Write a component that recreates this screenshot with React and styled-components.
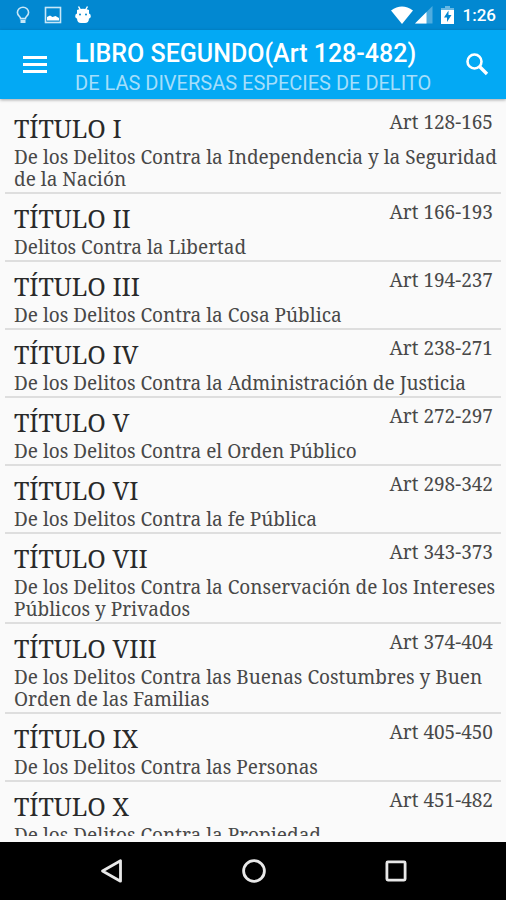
import React, { Component } from 'react';
import styled, { createGlobalStyle } from 'styled-components';

const GlobalStyle = createGlobalStyle`
  * {
    box-sizing: border-box;
  }

  body {
    margin: 0;
    background-color: #fafafa;
    font-family: Roboto, 'Liberation Sans', sans-serif;
  }
`;

const Screen = styled.div`
  display: flex;
  flex-direction: column;
  height: 100vh;
`;

const StatusBar = styled.div`
  display: flex;
  align-items: center;
  justify-content: space-between;
  flex-shrink: 0;
  height: 30px;
  padding: 0 10px 0 14px;
  background-color: #0288d1;
  color: white;
`;

const StatusGroup = styled.div`
  display: flex;
  align-items: center;
  gap: ${props => props.$gap}px;
`;

const Clock = styled.span`
  margin-left: 1px;
  font-size: 17px;
  font-weight: 500;
  line-height: 32px;
`;

const AppBar = styled.header`
  display: flex;
  align-items: center;
  flex-shrink: 0;
  height: 69px;
  padding: 0 13px 0 18px;
  background-color: #03a9f4;
  box-shadow: 0 1px 3px rgba(0, 0, 0, 0.35);
  color: white;
  z-index: 1;
`;

const BarButton = styled.button`
  display: flex;
  padding: 0;
  border: none;
  background: none;
  color: inherit;
  cursor: pointer;
`;

const Titles = styled.div`
  flex-grow: 1;
  padding-top: 6px;
  margin-left: 23px;
  white-space: nowrap;
`;

const BarTitle = styled.h1`
  margin: 0;
  font-size: 25px;
  font-weight: 500;
  line-height: 30px;
`;

const BarSubtitle = styled.p`
  margin: 0;
  color: #a4defb;
  font-size: 20px;
  line-height: 28px;
`;

const ListArea = styled.main`
  flex: 1;
  min-height: 0;
  padding: 5px 5px 6px;
`;

const List = styled.ul`
  height: 100%;
  margin: 0;
  padding: 0;
  overflow: hidden;
  list-style: none;
`;

const Item = styled.li`
  border-bottom: 2px solid #dedede;
`;

const ItemLink = styled.a`
  display: block;
  padding: 7px 0 2px 9px;
  color: #484848;
  font-family: 'Noto Serif', 'DejaVu Serif', serif;
  text-decoration: none;
`;

const ItemHead = styled.div`
  display: flex;
  align-items: flex-start;
  justify-content: space-between;
  padding: 0 8px 1px 0;
`;

const ItemTitle = styled.h2`
  margin: 0;
  color: #2a2a2a;
  font-size: 25px;
  font-weight: 400;
  line-height: 34px;
`;

const Articles = styled.span`
  font-size: 19px;
  line-height: 22px;
`;

const Summary = styled.p`
  margin: 0;
  font-size: 19px;
  line-height: 22px;
`;

const NavBar = styled.nav`
  display: flex;
  align-items: center;
  justify-content: center;
  gap: 114px;
  flex-shrink: 0;
  height: 58px;
  padding-left: 2px;
  background-color: black;
  color: #e8e8e8;
`;

const titles = [
  { id: 'I', articles: '128-165', text: 'De los Delitos Contra la Independencia y la Seguridad de la Nación' },
  { id: 'II', articles: '166-193', text: 'Delitos Contra la Libertad' },
  { id: 'III', articles: '194-237', text: 'De los Delitos Contra la Cosa Pública' },
  { id: 'IV', articles: '238-271', text: 'De los Delitos Contra la Administración de Justicia' },
  { id: 'V', articles: '272-297', text: 'De los Delitos Contra el Orden Público' },
  { id: 'VI', articles: '298-342', text: 'De los Delitos Contra la fe Pública' },
  { id: 'VII', articles: '343-373', text: 'De los Delitos Contra la Conservación de los Intereses Públicos y Privados' },
  { id: 'VIII', articles: '374-404', text: 'De los Delitos Contra las Buenas Costumbres y Buen Orden de las Familias' },
  { id: 'IX', articles: '405-450', text: 'De los Delitos Contra las Personas' },
  { id: 'X', articles: '451-482', text: 'De los Delitos Contra la Propiedad' }
];

const BulbIcon = () => (
  <svg width="18" height="18" viewBox="0 0 18 18" fill="none" stroke="#c8e7f8" strokeWidth="1.6">
    <path d="M6.6 12.6c0-2-3.200-3-3.200-6.200a5.600 5.200 0 0 1 11.200 0c0 3.200-3.200 4.200-3.200 6.200z" />
    <path d="M6.500 15.500h5" strokeWidth="3" />
  </svg>
);

const PictureIcon = () => (
  <svg width="18" height="18" viewBox="0 0 18 18">
    <rect x="1.500" y="1.500" width="15" height="15" fill="none" stroke="#c8e7f8" strokeWidth="1.600" />
    <path d="M3 14.500V11l3-1.500 2.500 1.500L11.500 10l3.500 2v2.500z" fill="white" />
  </svg>
);

const DroidIcon = () => (
  <svg width="18" height="18" viewBox="0 0 18 18">
    <path d="M4.500 0.500l2 3.500M13.500 0.500l-2 3.500" stroke="white" strokeWidth="1.500" />
    <path
      d="M3 4Q9 1.500 15 4V7.500Q17 8 16.800 10.500Q16.500 12.500 15 12.500Q14.800 17 11 17H7Q3.200 17 3 12.500Q1.500 12.500 1.200 10.500Q1 8 3 7.500z"
      fill="white"
    />
    <circle cx="6" cy="8.500" r="1" fill="#0288d1" />
    <circle cx="12" cy="8.500" r="1" fill="#0288d1" />
  </svg>
);

const WifiIcon = () => (
  <svg width="22" height="18" viewBox="0 0 22 18">
    <path d="M0 4.500Q11-3.500 22 4.500L11 18z" fill="white" />
  </svg>
);

const SignalIcon = () => (
  <svg width="18" height="18" viewBox="0 0 18 18">
    <path d="M0 17.500L17.500 0v17.500z" fill="#4facdf" />
    <path d="M0 17.500L11.500 6v11.500z" fill="white" />
  </svg>
);

const BatteryIcon = () => (
  <svg width="13" height="19" viewBox="0 0 13 19">
    <path d="M4 0h5v2h4v4H0V2h4z" fill="#67b8e3" />
    <path d="M0 4h13v14H0z" fill="white" />
    <path d="M7.500 4.500L3 11.500h3V16L10.500 9h-3z" fill="#0288d1" />
  </svg>
);

const MenuIcon = () => (
  <svg width="34" height="34" viewBox="0 0 34 34" fill="white">
    <path d="M5 8h24v3H5zM5 15h24v3H5zM5 22h24v3H5z" />
  </svg>
);

const SearchIcon = () => (
  <svg width="32" height="32" viewBox="0 0 32 32" fill="none" stroke="white">
    <circle cx="13.500" cy="12.500" r="7" strokeWidth="2.600" />
    <path d="M18.500 17.500l7.500 7.500" strokeWidth="3.400" />
  </svg>
);

const BackIcon = () => (
  <svg width="28" height="28" viewBox="0 0 28 28" fill="none" stroke="currentColor" strokeWidth="2.800">
    <path d="M22.500 3.800v20.400L4.500 14z" strokeLinejoin="round" />
  </svg>
);

const HomeIcon = () => (
  <svg width="28" height="28" viewBox="0 0 28 28" fill="none" stroke="currentColor" strokeWidth="2.800">
    <circle cx="14" cy="14" r="10.400" />
  </svg>
);

const RecentIcon = () => (
  <svg width="28" height="28" viewBox="0 0 28 28" fill="none" stroke="currentColor" strokeWidth="2.800">
    <rect x="4.900" y="4.900" width="18.200" height="18.200" rx="1" />
  </svg>
);

class App extends Component {
  render() {
    return (
      <Screen>
        <GlobalStyle />
        <StatusBar>
          <StatusGroup $gap={12}>
            <BulbIcon />
            <PictureIcon />
            <DroidIcon />
          </StatusGroup>
          <StatusGroup $gap={8}>
            <StatusGroup $gap={2}>
              <WifiIcon />
              <SignalIcon />
            </StatusGroup>
            <BatteryIcon />
            <Clock>1:26</Clock>
          </StatusGroup>
        </StatusBar>
        <AppBar>
          <BarButton type="button" aria-label="Menú">
            <MenuIcon />
          </BarButton>
          <Titles>
            <BarTitle>LIBRO SEGUNDO(Art 128-482)</BarTitle>
            <BarSubtitle>DE LAS DIVERSAS ESPECIES DE DELITO</BarSubtitle>
          </Titles>
          <BarButton type="button" aria-label="Buscar">
            <SearchIcon />
          </BarButton>
        </AppBar>
        <ListArea>
          <List>
            {titles.map(title => (
              <Item key={title.id}>
                <ItemLink href={`#titulo-${title.id}`}>
                  <ItemHead>
                    <ItemTitle>TÍTULO {title.id}</ItemTitle>
                    <Articles>Art {title.articles}</Articles>
                  </ItemHead>
                  <Summary>{title.text}</Summary>
                </ItemLink>
              </Item>
            ))}
          </List>
        </ListArea>
        <NavBar>
          <BarButton type="button" aria-label="Atrás">
            <BackIcon />
          </BarButton>
          <BarButton type="button" aria-label="Inicio">
            <HomeIcon />
          </BarButton>
          <BarButton type="button" aria-label="Recientes">
            <RecentIcon />
          </BarButton>
        </NavBar>
      </Screen>
    );
  }
}

export default App;
